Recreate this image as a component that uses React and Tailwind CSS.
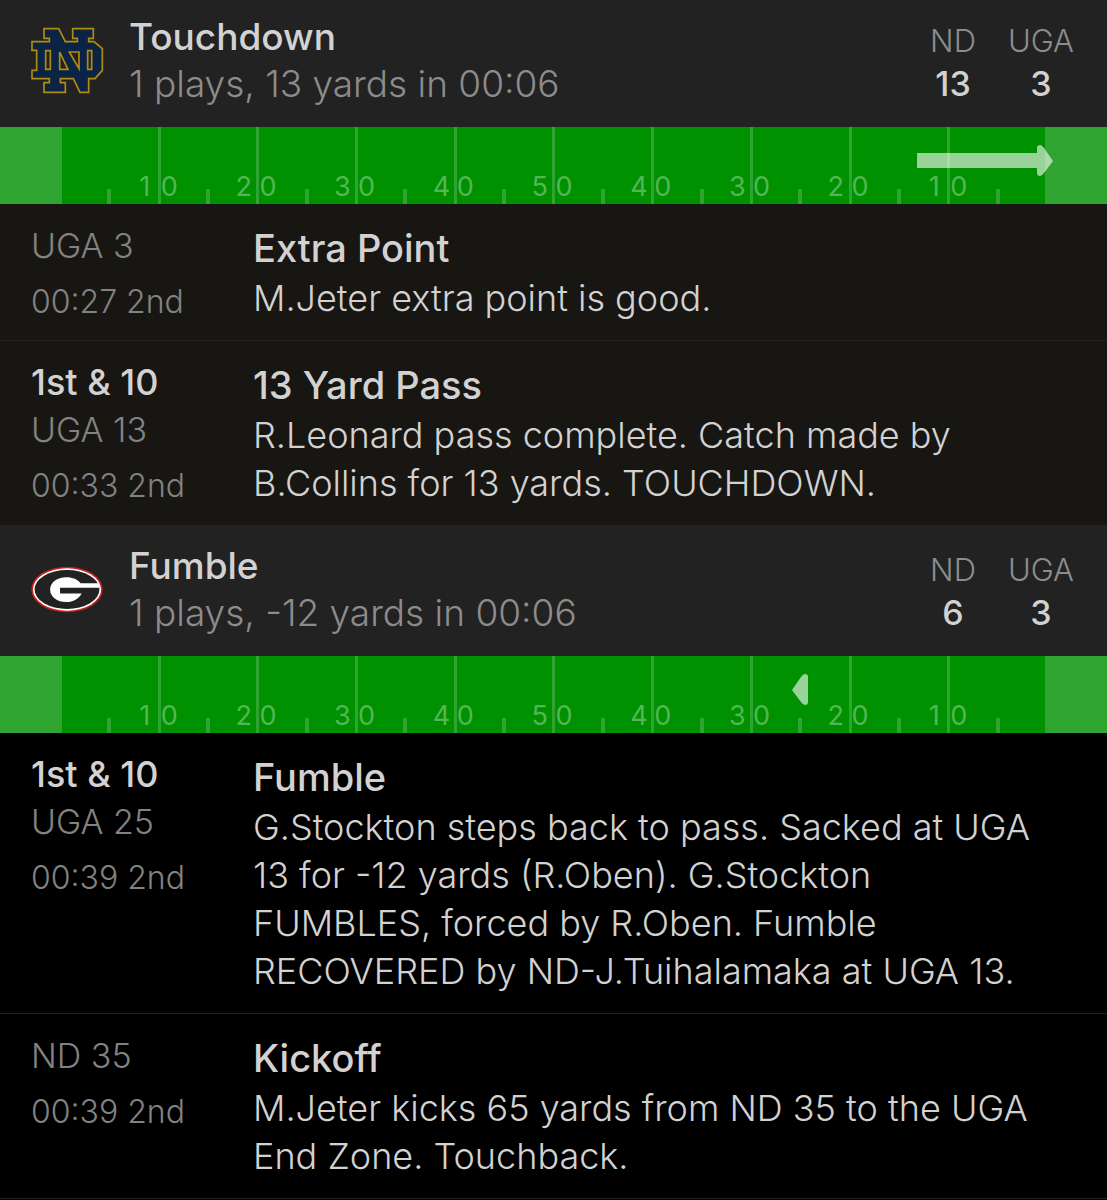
const FONT = "font-['Inter','Noto_Sans',sans-serif]";

function NotreDameLogo() {
  return (
    <svg viewBox="30 38 222 201" className="h-[67px] w-[74px]" role="img" aria-label="Notre Dame">
      <path
        d="M72 43H116L136 82H172V72H158V43H220V72H206V82H222L247 103V168L225 193H206V234H180L160 193H121V205H136V234H72V205H88V193H36V168H50V108H36V82H88V72H72ZM77 109V165H91V109ZM119 113V165H144ZM148 113L177 163V113ZM203 109V165H215V109Z"
        fill="#0b2345"
        fillRule="evenodd"
        stroke="#b08d0c"
        strokeWidth="5"
      />
    </svg>
  );
}

function GeorgiaLogo() {
  return (
    <svg viewBox="30 35 222 142" className="h-[47px] w-[74px]" role="img" aria-label="Georgia">
      <ellipse cx="141" cy="106" rx="108" ry="69" fill="#c8201f" />
      <ellipse cx="141" cy="106" rx="103" ry="64" fill="#ffffff" />
      <ellipse cx="141" cy="106" rx="98" ry="59" fill="#222222" />
      <path
        d="M238 87H182C174 76 158 69 139 69C111 69 90 85 90 106C90 128 111 144 139 144C160 144 177 134 185 118H120V101H239Z"
        fill="#ffffff"
      />
    </svg>
  );
}

const scoreTeams = ["ND", "UGA"];

function DriveHeader({ logo, title, summary, scores, padding }) {
  return (
    <header className={`flex items-center bg-[#222222] pr-[33px] pb-5 pl-[30px] ${padding}`}>
      {logo}
      <div className="ml-[25px] flex-1 leading-[47px]">
        <h2 className="text-[37px] font-medium text-[#d2d2d2]">{title}</h2>
        <p className="text-[37px] font-light text-[#8c8c8c]">{summary}</p>
      </div>
      <dl className="flex gap-8 pt-1 text-center leading-[43px]">
        {scoreTeams.map((team, i) => (
          <div key={team}>
            <dt className="text-[31px] font-light text-[#8c8c8c]">{team}</dt>
            <dd className="text-[34px] font-medium text-[#d2d2d2]">{scores[i]}</dd>
          </div>
        ))}
      </dl>
    </header>
  );
}

const yardLines = ["10", "20", "30", "40", "50", "40", "30", "20", "10", null];

function Field({ children }) {
  return (
    <div className="relative flex h-[77px] bg-[#009100]">
      <div className="w-[62px] bg-[#30a430]" />
      <div className="flex-1" />
      <div className="w-[62px] bg-[#30a430]" />
      <div className="absolute inset-0 grid grid-cols-10 px-[60px]">
        {yardLines.map((label, i) => (
          <div key={i} className="relative flex items-end justify-center">
            <span className="h-[15px] w-1 bg-[#30a430]" />
            {label && (
              <>
                <span className="absolute inset-y-0 -right-[2px] w-[3px] bg-[#30a430]" />
                <span className="absolute right-0 bottom-0 flex translate-x-1/2 gap-2 pr-1 text-[27px] leading-[34px] text-[#54b654]">
                  <span className="w-4 text-center">{label[0]}</span>
                  <span className="w-4 text-center">{label[1]}</span>
                </span>
              </>
            )}
          </div>
        ))}
      </div>
      {children}
    </div>
  );
}

function Play({ down, spot, clock, title, text, tone }) {
  return (
    <article className={`flex border-b border-[#222222] pr-14 pb-[15px] pl-[31px] ${tone}`}>
      <div className="w-[222px] shrink-0 pt-[18px] leading-[47px] font-light text-[#828282]">
        {down && <p className="text-[36px] font-medium text-[#d2d2d2]">{down}</p>}
        <p className="text-[34px]">{spot}</p>
        <p className="mt-[9px] text-[32px]">{clock}</p>
      </div>
      <div className="min-w-0 flex-1 pt-5 pb-[3px] leading-[48px] text-[#d2d2d2]">
        <h3 className="text-[38px] font-medium">{title}</h3>
        <p className="mt-0.5 text-[36px] font-light">{text}</p>
      </div>
    </article>
  );
}

const warm = "bg-[#181613]";
const black = "bg-black";

export default function App() {
  return (
    <main className={`min-h-screen bg-black ${FONT}`}>
      <section>
        <DriveHeader
          logo={<NotreDameLogo />}
          title="Touchdown"
          summary="1 plays, 13 yards in 00:06"
          scores={[13, 3]}
          padding="pt-[13px]"
        />
        <Field>
          <svg viewBox="0 0 136 32" className="absolute top-[18px] right-[54px] h-8 w-[136px]" aria-hidden="true">
            <path
              d="M0 8H120V3Q120 0 123 0Q125 0 127 3L136 16L127 28Q125 31 123 31Q120 31 120 28V23H0Z"
              fill="#ffffff"
              fillOpacity="0.6"
            />
          </svg>
        </Field>
        <Play tone={warm} spot="UGA 3" clock="00:27 2nd" title="Extra Point" text="M.Jeter extra point is good." />
        <Play
          tone={warm}
          down="1st & 10"
          spot="UGA 13"
          clock="00:33 2nd"
          title="13 Yard Pass"
          text="R.Leonard pass complete. Catch made by B.Collins for 13 yards. TOUCHDOWN."
        />
      </section>
      <section>
        <DriveHeader
          logo={<GeorgiaLogo />}
          title="Fumble"
          summary="1 plays, -12 yards in 00:06"
          scores={[6, 3]}
          padding="pt-4"
        />
        <Field>
          <svg viewBox="0 0 16 32" className="absolute top-[18px] right-[299px] h-8 w-4" aria-hidden="true">
            <path
              d="M0 16L9 3Q11 0 13 0Q16 0 16 3V28Q16 31 13 31Q11 31 9 28Z"
              fill="#ffffff"
              fillOpacity="0.6"
            />
          </svg>
        </Field>
        <Play
          tone={black}
          down="1st & 10"
          spot="UGA 25"
          clock="00:39 2nd"
          title="Fumble"
          text="G.Stockton steps back to pass. Sacked at UGA 13 for -12 yards (R.Oben). G.Stockton FUMBLES, forced by R.Oben. Fumble RECOVERED by ND-J.Tuihalamaka at UGA 13."
        />
        <Play
          tone={black}
          spot="ND 35"
          clock="00:39 2nd"
          title="Kickoff"
          text="M.Jeter kicks 65 yards from ND 35 to the UGA End Zone. Touchback."
        />
      </section>
    </main>
  );
}
